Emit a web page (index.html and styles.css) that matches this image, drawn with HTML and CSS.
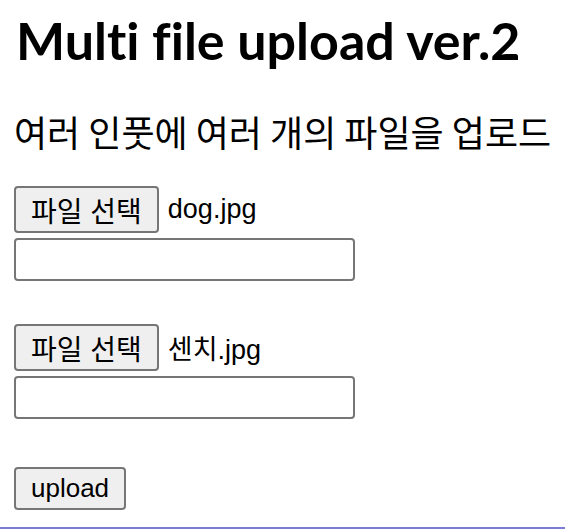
FILE: index.html
```html
<!DOCTYPE html>
<html>
<head>
<title>Multi file upload ver.2</title>
<link rel="stylesheet" href="styles.css">
</head>
<body>

<div class="page">
    <h1 class="title">Multi file upload ver.2</h1>
    <p class="desc">여러 인풋에 여러 개의 파일을 업로드</p>

    <form class="uploadForm" onsubmit="return false;">
        <div class="fileGroup">
            <div class="fileRow">
                <button type="button" class="fileBtn">파일 선택</button>
                <span class="fileName">dog.jpg</span>
            </div>
            <input class="textBox" type="text">
        </div>

        <div class="fileGroup">
            <div class="fileRow">
                <button type="button" class="fileBtn">파일 선택</button>
                <span class="fileName">센치.jpg</span>
            </div>
            <input class="textBox" type="text">
        </div>

        <div class="buttonRow">
            <button type="submit" class="uploadBtn">upload</button>
        </div>
    </form>
</div>

<div class="bottomLine"></div>

</body>
</html>
```

FILE: styles.css
```css
body{
    margin:0;
    font-family:"Noto Sans CJK KR", sans-serif;
    background:#ffffff;
    color:#000000;
}
.page{
    padding:0 14px;
    height:527px;
    box-sizing:border-box;
    overflow:hidden;
}
.title{
    margin:0;
    padding-top:8px;
    padding-left:2px;
    font-family:Lato, "Noto Sans CJK KR", sans-serif;
    font-size:52px;
    font-weight:bold;
    line-height:64px;
    white-space:nowrap;
    font-variant-ligatures:none;
}
.desc{
    margin:37px 0 0 0;
    font-size:36px;
    line-height:44px;
    white-space:nowrap;
}
.uploadForm{
    margin-top:33px;
    display:flex;
    flex-direction:column;
    align-items:flex-start;
}
.fileGroup{
    display:flex;
    flex-direction:column;
    gap:5px;
    margin-bottom:43px;
}
.fileRow{
    display:flex;
    align-items:center;
    gap:9px;
}
.fileBtn, .uploadBtn{
    height:47px;
    padding:0 15px;
    border:2px solid #767676;
    border-radius:4px;
    background:#efefef;
    font-family:"Liberation Sans", "Noto Sans CJK KR", sans-serif;
    font-size:28px;
    color:#000000;
    box-sizing:border-box;
}
.uploadBtn{
    height:43px;
    padding:0 15px;
    font-size:26px;
}
.fileName{
    font-family:"Liberation Sans", "Noto Sans CJK KR", sans-serif;
    font-size:27px;
}
.textBox{
    width:341px;
    height:43px;
    border:2px solid #767676;
    border-radius:4px;
    box-sizing:border-box;
    margin:0;
}
.buttonRow{
    margin-top:5px;
}
.bottomLine{
    height:2px;
    background:#7b7bd3;
}
```
